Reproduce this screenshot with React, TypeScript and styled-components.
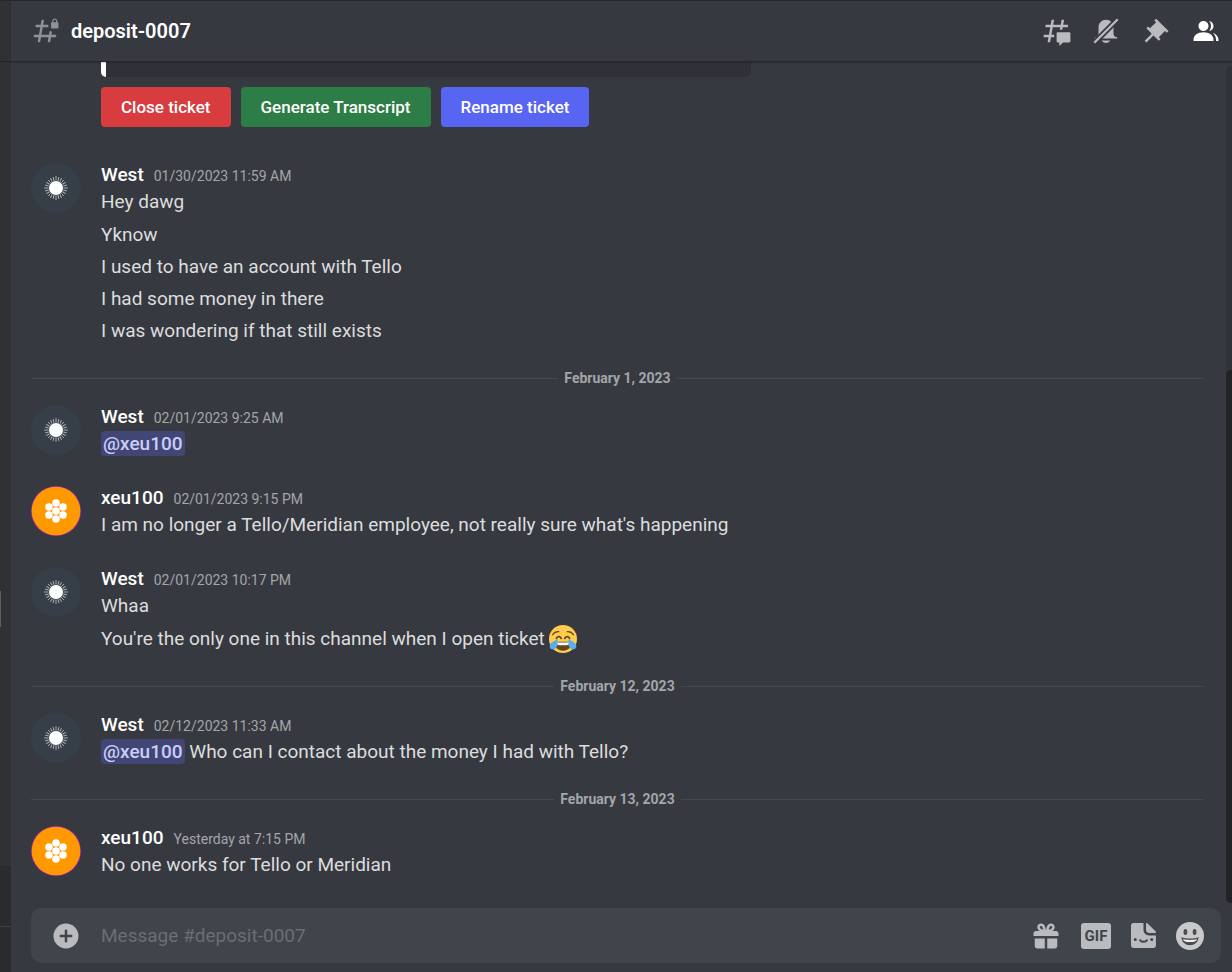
import React from "react";
import styled, { createGlobalStyle } from "styled-components";

const c = {
  bg: "#36393f",
  side: "#303135",
  sideDark: "#2a2b2f",
  embed: "#303136",
  text: "#dcddde",
  muted: "#a3a6aa",
  icon: "#b9bbbe",
  input: "#40444b",
};

const Global = createGlobalStyle`
  *, *::before, *::after { box-sizing: border-box; }
  body { margin: 0; background: ${c.bg}; }
  button, input { font: inherit; }
`;

const Page = styled.div`
  display: grid;
  grid-template-columns: 11px minmax(0, 1fr);
  height: 100vh;
  overflow: hidden;
  border-top: 1px solid #26272b;
  background: ${c.bg};
  color: ${c.text};
  font-family: Roboto, "Noto Sans", sans-serif;
  font-size: 19px;
  line-height: 28px;
`;

const Sidebar = styled.div`
  display: flex;
  flex-direction: column;
  background: ${c.side};
`;
const SideHead = styled.div`
  height: 61px;
  border-bottom: 1px solid #232428;
`;
const SideList = styled.div`
  flex: 1;
  display: flex;
  flex-direction: column;
  justify-content: center;
  padding-top: 290px;
`;
const UnreadMark = styled.div`
  width: 1px;
  height: 36px;
  background: #5b5d62;
`;
const SideVoice = styled.div`
  height: 61px;
  background: ${c.sideDark};
  border-bottom: 1px solid #3f4045;
`;
const SideUser = styled.div`
  height: 45px;
  background: ${c.sideDark};
`;

const Main = styled.main`
  display: flex;
  flex-direction: column;
  min-height: 0;
`;

const Header = styled.header`
  display: flex;
  align-items: center;
  justify-content: space-between;
  height: 60px;
  flex: none;
  padding: 0 11px 0 20px;
  position: relative;
  box-shadow: 0 1px 0 #28292d, 0 2px 1px rgba(0, 0, 0, 0.15);
`;
const TitleGroup = styled.div`
  display: flex;
  align-items: center;
  gap: 10px;
  color: #8e9297;
`;
const Title = styled.h1`
  margin: 0;
  color: #fff;
  font-size: 20px;
  font-weight: 600;
  line-height: 28px;
`;
const Toolbar = styled.div`
  display: flex;
  align-items: center;
  gap: 20px;
`;
const IconButton = styled.button<{ $active?: boolean }>`
  display: flex;
  padding: 0;
  border: 0;
  background: none;
  color: ${(p) => (p.$active ? "#fff" : c.icon)};
  cursor: pointer;
`;

const Scroller = styled.div`
  flex: 1;
  min-height: 0;
  display: grid;
  grid-template-columns: minmax(0, 1fr) 6px;
  overflow: hidden;
`;
const Feed = styled.div`
  display: flex;
  flex-direction: column;
  gap: 20px;
  min-width: 0;
  min-height: 0;
  overflow: hidden;
  padding: 1px 22px 0 20px;
`;
const Track = styled.div`
  display: grid;
  grid-template-rows: 4fr 7fr;
  margin: 5px 0;
  border-radius: 5px 0 0 5px;
  background: #2f3237;
`;
const Thumb = styled.div`
  grid-row: 2;
  border-radius: 5px 0 0 5px;
  background: #202225;
`;

const Ticket = styled.section`
  display: flex;
  flex-direction: column;
  gap: 10px;
  padding: 0 0 15px 70px;
`;
const Embed = styled.div`
  width: 100%;
  max-width: 650px;
  height: 15px;
  border-left: 5px solid #fff;
  border-radius: 0 0 5px 5px;
  background: ${c.embed};
`;
const Actions = styled.div`
  display: flex;
  gap: 10px;
`;
const Action = styled.button<{ $color: string }>`
  height: 40px;
  padding: 0 20px;
  border: 0;
  border-radius: 4px;
  background: ${(p) => p.$color};
  color: #fff;
  font-size: 17px;
  font-weight: 500;
  white-space: nowrap;
  cursor: pointer;
`;

const Group = styled.article`
  display: grid;
  grid-template-columns: 50px minmax(0, 1fr);
  gap: 20px;
  padding-bottom: 7px;
`;
const Avatar = styled.div`
  padding-top: 1px;
  line-height: 0;
`;
const Meta = styled.div`
  display: flex;
  align-items: baseline;
  gap: 10px;
`;
const Author = styled.h2`
  margin: 0;
  color: #fff;
  font-size: 19px;
  font-weight: 500;
  line-height: 26px;
`;
const Time = styled.time`
  color: ${c.muted};
  font-size: 14px;
  line-height: 20px;
`;
const Line = styled.p`
  margin: 0;
`;
const Continued = styled.div`
  margin: 3px 0 -2px;
  ${Line} {
    padding: 2px 0;
  }
`;
const Mention = styled.a`
  padding: 1px 2px;
  border-radius: 4px;
  background: #414675;
  color: #c9cdfb;
  font-weight: 500;
  text-decoration: none;
`;
const EmojiSlot = styled.span`
  display: inline-flex;
  height: 28px;
  vertical-align: top;
`;

const Divider = styled.div`
  display: flex;
  align-items: center;
  gap: 6px;
  height: 12px;
  color: ${c.muted};
  font-size: 14px;
  font-weight: 700;
  line-height: 12px;
  white-space: nowrap;
  &::before,
  &::after {
    content: "";
    flex: 1;
    height: 1px;
    background: #45484e;
  }
`;

const Composer = styled.form`
  display: flex;
  align-items: center;
  gap: 20px;
  flex: none;
  height: 55px;
  margin: 0 11px 9px 20px;
  padding: 0 17px 0 20px;
  border-radius: 10px;
  background: ${c.input};
`;
const Field = styled.input`
  flex: 1;
  min-width: 0;
  padding: 0;
  border: 0;
  outline: 0;
  background: none;
  color: ${c.text};
  &::placeholder {
    color: #6b6e75;
    opacity: 1;
  }
`;
const GifBadge = styled.span`
  width: 30px;
  height: 26px;
  border-radius: 3px;
  background: ${c.icon};
  color: ${c.input};
  font-size: 15px;
  font-weight: 700;
  line-height: 26px;
  text-align: center;
`;

const Svg = ({ size = 30, box = 24, children }: { size?: number; box?: number; children: React.ReactNode }) => (
  <svg width={size} height={size} viewBox={`0 0 ${box} ${box}`} fill="currentColor" aria-hidden="true">
    {children}
  </svg>
);

const HashLock = () => (
  <Svg>
    <path d="M14 8C14 7.44772 13.5523 7 13 7H9.76001L10.3657 3.58738C10.4201 3.28107 10.1845 3 9.87344 3H8.88907C8.64664 3 8.43914 3.17391 8.39677 3.41262L7.76001 7H4.18011C3.93722 7 3.72946 7.17456 3.68759 7.41381L3.51259 8.41381C3.45905 8.71977 3.69449 9 4.00511 9H7.41001L6.35001 15H2.77011C2.52722 15 2.31946 15.1746 2.27759 15.4138L2.10259 16.4138C2.04905 16.7198 2.28449 17 2.59511 17H6.00001L5.39427 20.4126C5.3399 20.7189 5.57547 21 5.88657 21H6.87094C7.11337 21 7.32088 20.8261 7.36325 20.5874L8.00001 17H14L13.3943 20.4126C13.3399 20.7189 13.5755 21 13.8866 21H14.8709C15.1134 21 15.3209 20.8261 15.3632 20.5874L16 17H19.5799C19.8228 17 20.0306 16.8254 20.0724 16.5862L20.2474 15.5862C20.301 15.2802 20.0655 15 19.7549 15H16.35L16.6758 13.1558C16.7823 12.5529 16.3186 12 15.7063 12C15.2286 12 14.8199 12.3429 14.7368 12.8133L14.3504 15H8.35045L9.41045 9H13C13.5523 9 14 8.55228 14 8Z" />
    <path
      fillRule="evenodd"
      d="M21.025 5V4C21.025 2.88 20.05 2 19 2C17.95 2 17 2.88 17 4V5C16.4477 5 16 5.44772 16 6V9C16 9.55228 16.4477 10 17 10H21C21.5523 10 22 9.55228 22 9V5.975C22 5.43652 21.5635 5 21.025 5ZM20 5H18V4C18 3.42857 18.4667 3 19 3C19.5333 3 20 3.42857 20 4V5Z"
    />
  </Svg>
);

const Threads = () => (
  <Svg>
    <path d="M5.43309 21C5.35842 21 5.30189 20.9325 5.31494 20.859L5.99991 17H2.14274C2.06819 17 2.01168 16.9327 2.02453 16.8593L2.33253 15.0993C2.34258 15.0419 2.39244 15 2.45074 15H6.34991L7.40991 9H3.55274C3.47819 9 3.42168 8.93274 3.43453 8.85931L3.74253 7.09931C3.75258 7.04189 3.80244 7 3.86074 7H7.75991L8.45234 3.09903C8.46251 3.04174 8.51231 3 8.57049 3H10.3267C10.4014 3 10.4579 3.06746 10.4449 3.14097L9.75991 7H15.7599L16.4523 3.09903C16.4625 3.04174 16.5123 3 16.5705 3H18.3267C18.4014 3 18.4579 3.06746 18.4449 3.14097L17.7599 7H21.6171C21.6916 7 21.7481 7.06725 21.7353 7.14069L21.4273 8.90069C21.4172 8.95811 21.3674 9 21.3091 9H17.4099L17.0495 11.04H15.05L15.4104 9H9.41035L8.35035 15H10.5599V17H7.99991L7.30749 20.901C7.29732 20.9583 7.24752 21 7.18934 21H5.43309Z" />
    <path d="M13.4399 12.96C12.9097 12.96 12.4799 13.3898 12.4799 13.92V20.2213C12.4799 20.7515 12.9097 21.1813 13.4399 21.1813H14.3999C14.5325 21.1813 14.6399 21.2887 14.6399 21.4213V23.4597C14.6399 23.6677 14.8865 23.7773 15.0408 23.6378L17.4858 21.4289C17.6622 21.2695 17.8916 21.1813 18.1294 21.1813H22.5599C23.0901 21.1813 23.5199 20.7515 23.5199 20.2213V13.92C23.5199 13.3898 23.0901 12.96 22.5599 12.96H13.4399Z" />
  </Svg>
);

const BellOff = () => (
  <Svg>
    <mask id="bell-cut" maskUnits="userSpaceOnUse" x="0" y="0" width="24" height="24">
      <rect width="24" height="24" fill="#fff" />
      <path d="M1 23L23 1" stroke="#000" strokeWidth="4.6" />
    </mask>
    <g mask="url(#bell-cut)">
      <path d="M18 9V14C18 15.657 19.344 17 21 17V18H3V17C4.656 17 6 15.657 6 14V9C6 5.686 8.686 3 12 3C15.314 3 18 5.686 18 9ZM12 21.5C10.524 21.5 9.248 20.7 8.555 19.5H15.445C14.752 20.7 13.476 21.5 12 21.5Z" />
    </g>
    <path d="M2.6 21.4L21.4 2.6" stroke="currentColor" strokeWidth="1.8" />
  </Svg>
);

const Pin = () => (
  <Svg>
    <path d="M22 12L12.101 2.10101L10.686 3.51401L12.101 4.92901L7.15096 9.87801V9.88001L5.73596 8.46501L4.32196 9.88001L8.56496 14.122L2.90796 19.778L4.32196 21.192L9.97896 15.536L14.222 19.778L15.636 18.364L14.222 16.95L19.171 12H19.172L20.586 13.414L22 12Z" />
  </Svg>
);

const Members = () => (
  <Svg>
    <path d="M14 8.006C14 10.211 12.206 12.006 10 12.006C7.795 12.006 6 10.211 6 8.006C6 5.801 7.794 4.006 10 4.006C12.206 4.006 14 5.801 14 8.006ZM2 19.006C2 15.473 5.29 13.006 10 13.006C14.711 13.006 18 15.473 18 19.006V20.006H2V19.006Z" />
    <path d="M20 20.006H22V19.006C22 16.443 20.27 14.441 17.521 13.535C19.062 14.913 20 16.806 20 19.006V20.006Z" />
    <path d="M14.883 11.908C16.666 11.504 18 9.908 18 8.006C18 5.969 16.469 4.282 14.497 4.037C15.432 5.095 16 6.485 16 8.006C16 9.449 15.489 10.774 14.638 11.81C14.72 11.842 14.802 11.874 14.883 11.908Z" />
  </Svg>
);

const Plus = () => (
  <Svg>
    <circle cx="12" cy="12" r="10" />
    <path d="M12 7V17M7 12H17" stroke={c.input} strokeWidth="2" />
  </Svg>
);

const Gift = () => (
  <Svg>
    <path
      fillRule="evenodd"
      d="M16.886 7.999H20C21.104 7.999 22 8.896 22 9.999V11.999H2V9.999C2 8.896 2.897 7.999 4 7.999H7.114C6.663 7.764 6.236 7.477 5.879 7.121C4.709 5.951 4.709 4.048 5.879 2.879C7.012 1.746 8.986 1.746 10.121 2.877C11.758 4.514 11.979 7.595 11.998 7.941L11.99 7.999H12.01L12.002 7.942C12.021 7.596 12.242 4.515 13.879 2.878C15.014 1.745 16.986 1.746 18.121 2.877C19.29 4.049 19.29 5.952 18.121 7.121C17.764 7.477 17.337 7.764 16.886 7.999ZM7.293 5.707C6.903 5.316 6.903 4.682 7.293 4.292C7.481 4.103 7.732 4 8 4C8.268 4 8.519 4.103 8.707 4.292C9.297 4.882 9.641 5.94 9.825 6.822C8.945 6.639 7.879 6.293 7.293 5.707ZM14.174 6.824C14.359 5.941 14.702 4.883 15.293 4.293C15.481 4.103 15.732 4 16 4C16.268 4 16.519 4.103 16.706 4.291C17.096 4.682 17.097 5.316 16.707 5.707C16.116 6.298 15.057 6.642 14.174 6.824ZM3 13.999V19.999C3 21.102 3.897 21.999 5 21.999H11V13.999H3ZM13 13.999V21.999H19C20.104 21.999 21 21.102 21 19.999V13.999H13Z"
    />
  </Svg>
);

const Sticker = () => (
  <Svg size={25} box={20}>
    <path d="M12 .663V5.402C12 6.84 13.16 8 14.599 8H19.339C19.925 8 20.222 7.296 19.806 6.879L13.121.196C12.704-.22 12 .078 12 .663Z" />
    <path d="M14.576 10C12.034 10 9.97 7.964 9.97 5.422V0H1.994C.893 0 0 .9 0 2V18C0 19.1.893 20 1.994 20H17.946C19.047 20 19.94 19.1 19.94 18V10H14.576Z" />
    <g fill={c.input}>
      <circle cx="3.4" cy="13.2" r="1.2" />
      <circle cx="16.6" cy="13.2" r="1.2" />
    </g>
    <path d="M7 13.2C7.7 15.6 12.3 15.6 13 13.2" fill="none" stroke={c.input} strokeWidth="1.5" />
  </Svg>
);

const Grin = () => (
  <Svg size={28} box={28}>
    <circle cx="14" cy="14" r="14" fill="#c9c9c9" />
    <ellipse cx="9.4" cy="10" rx="1.9" ry="2.9" fill="#4a4c50" />
    <ellipse cx="18.6" cy="10" rx="1.9" ry="2.9" fill="#4a4c50" />
    <path d="M5.4 15.3C10 17 18 17 22.6 15.3C22.4 20.2 18.5 23.3 14 23.3S5.6 20.2 5.4 15.3Z" fill="#4a4c50" />
    <path d="M7 17C11 18.2 17 18.2 21 17C20.5 19.5 18 20 14 20S7.5 19.5 7 17Z" fill="#f2f2f2" />
  </Svg>
);

const Joy = () => (
  <svg width="28" height="28" viewBox="0 0 36 36" role="img" aria-label="face with tears of joy">
    <circle cx="18" cy="18" r="18" fill="#ffcc4d" />
    <g fill="none" stroke="#65471b" strokeLinecap="round">
      <path d="M4.5 12.5C6.5 9.5 9 8.3 12.500 8.500M31.500 12.500C29.500 9.500 27 8.300 23.500 8.500" strokeWidth="1.6" />
      <path d="M9.500 17C11.500 14.300 14 14.300 15.800 17.300M20.200 17.300C22 14.300 24.500 14.300 26.500 17" strokeWidth="2.2" />
    </g>
    <path d="M6.500 20.500C13 22 23 22 29.500 20.500C30 27.500 25 33 18 33S6 27.500 6.500 20.500Z" fill="#65471b" />
    <path d="M8 21.500C14 23 22 23 28 21.500C27.500 25.500 24 26 18 26S8.500 25.500 8 21.500Z" fill="#fff" />
    <path d="M10.500 17.500C12 23 11 31.500 5.500 31.500C0 31.500 0 26 2.500 23.500C5 21.200 8.500 20.500 10.500 17.500ZM25.500 17.500C24 23 25 31.500 30.500 31.500C36 31.500 36 26 33.500 23.500C31 21.200 27.500 20.500 25.500 17.500Z" fill="#5dadec" />
  </svg>
);

const rays = Array.from({ length: 24 }, (_, i) => i * 15);

const SunAvatar = () => (
  <svg width="50" height="50" viewBox="0 0 50 50" aria-hidden="true">
    <circle cx="25" cy="25" r="25" fill="#363f48" />
    {rays.map((a) => (
      <path key={a} d={a % 90 ? "M25 17.5V13.8" : "M25 17.5V13"} stroke="#b4b8bc" strokeWidth="0.9" transform={`rotate(${a} 25 25)`} />
    ))}
    <circle cx="25" cy="25" r="7" fill="#fff" />
  </svg>
);

const petals = [[25, 17], [25, 25], [25, 33], [18, 21], [32, 21], [18, 29], [32, 29]];

const CombAvatar = () => (
  <svg width="50" height="50" viewBox="0 0 50 50" aria-hidden="true">
    <circle cx="25" cy="25" r="25" fill="#b01fc4" />
    <circle cx="25" cy="25" r="24.3" fill="#ff9900" />
    {petals.map(([x, y]) => (
      <circle key={`${x}-${y}`} cx={x} cy={y} r="3.8" fill="#fff" />
    ))}
  </svg>
);

type PostProps = { author: "West" | "xeu100"; time: string; first: React.ReactNode; more?: React.ReactNode[] };

const Post = ({ author, time, first, more }: PostProps) => (
  <Group>
    <Avatar>{author === "West" ? <SunAvatar /> : <CombAvatar />}</Avatar>
    <div>
      <Meta>
        <Author>{author}</Author>
        <Time>{time}</Time>
      </Meta>
      <Line>{first}</Line>
      {more && (
        <Continued>
          {more.map((m, i) => (
            <Line key={i}>{m}</Line>
          ))}
        </Continued>
      )}
    </div>
  </Group>
);

export default function App() {
  return (
    <>
      <Global />
      <Page>
        <Sidebar>
          <SideHead />
          <SideList>
            <UnreadMark />
          </SideList>
          <SideVoice />
          <SideUser />
        </Sidebar>
        <Main>
          <Header>
            <TitleGroup>
              <HashLock />
              <Title>deposit-0007</Title>
            </TitleGroup>
            <Toolbar>
              <IconButton aria-label="Threads"><Threads /></IconButton>
              <IconButton aria-label="Notification settings"><BellOff /></IconButton>
              <IconButton aria-label="Pinned messages"><Pin /></IconButton>
              <IconButton aria-label="Member list" $active><Members /></IconButton>
            </Toolbar>
          </Header>
          <Scroller>
            <Feed>
              <Ticket>
                <Embed />
                <Actions>
                  <Action $color="#d83c3e">Close ticket</Action>
                  <Action $color="#2d7d46">Generate Transcript</Action>
                  <Action $color="#5865f2">Rename ticket</Action>
                </Actions>
              </Ticket>
              <Post
                author="West"
                time="01/30/2023 11:59 AM"
                first="Hey dawg"
                more={[
                  "Yknow",
                  "I used to have an account with Tello",
                  "I had some money in there",
                  "I was wondering if that still exists",
                ]}
              />
              <Divider>February 1, 2023</Divider>
              <Post author="West" time="02/01/2023 9:25 AM" first={<Mention href="#xeu100">@xeu100</Mention>} />
              <Post
                author="xeu100"
                time="02/01/2023 9:15 PM"
                first="I am no longer a Tello/Meridian employee, not really sure what's happening"
              />
              <Post
                author="West"
                time="02/01/2023 10:17 PM"
                first="Whaa"
                more={[
                  <>
                    You're the only one in this channel when I open ticket <EmojiSlot><Joy /></EmojiSlot>
                  </>,
                ]}
              />
              <Divider>February 12, 2023</Divider>
              <Post
                author="West"
                time="02/12/2023 11:33 AM"
                first={
                  <>
                    <Mention href="#xeu100">@xeu100</Mention> Who can I contact about the money I had with Tello?
                  </>
                }
              />
              <Divider>February 13, 2023</Divider>
              <Post author="xeu100" time="Yesterday at 7:15 PM" first="No one works for Tello or Meridian" />
            </Feed>
            <Track>
              <Thumb />
            </Track>
          </Scroller>
          <Composer onSubmit={(e) => e.preventDefault()}>
            <IconButton type="button" aria-label="Add attachment"><Plus /></IconButton>
            <Field aria-label="Message #deposit-0007" placeholder="Message #deposit-0007" />
            <IconButton type="button" aria-label="Send a gift"><Gift /></IconButton>
            <IconButton type="button"><GifBadge>GIF</GifBadge></IconButton>
            <IconButton type="button" aria-label="Stickers"><Sticker /></IconButton>
            <IconButton type="button" aria-label="Emoji"><Grin /></IconButton>
          </Composer>
        </Main>
      </Page>
    </>
  );
}
